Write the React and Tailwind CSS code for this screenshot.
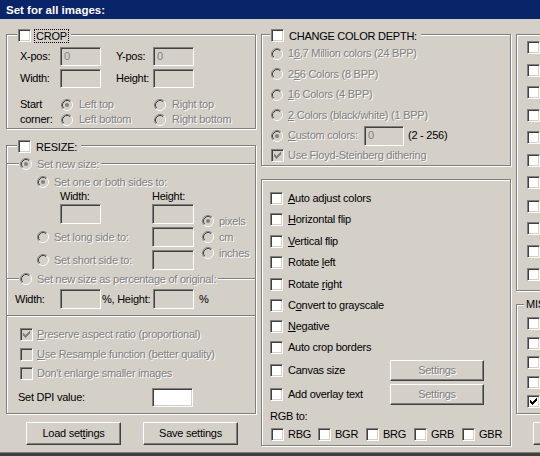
import React from 'react';

// Win2000 style dialog: batch "advanced options"
const DIS = 'text-[#808080] [text-shadow:1px_1px_0_#fff]';
const GROUP = 'relative border border-[#808080] shadow-[inset_1px_1px_0_#fff,1px_1px_0_#fff]';

function Check({ checked, disabled, className = '' }) {
  return (
    <span
      className={`relative inline-block w-[13px] h-[13px] shrink-0 border border-t-[#808080] border-l-[#808080] border-b-white border-r-white shadow-[inset_1px_1px_0_#404040,inset_-1px_-1px_0_#d4d0c8] ${
        disabled ? 'bg-[#d4d0c8]' : 'bg-white'
      } ${className}`}
    >
      {checked && (
        <svg width="7" height="7" viewBox="0 0 7 7" className="absolute left-[2px] top-[2px]">
          {[2, 3, 4, 3, 2, 1, 0].map((y, i) => (
            <rect key={i} x={i} y={y} width="1" height="3" fill={disabled ? '#808080' : '#000'} />
          ))}
        </svg>
      )}
    </span>
  );
}

function Radio({ checked, disabled = true, className = '' }) {
  return (
    <svg width="12" height="12" viewBox="0 0 12 12" className={`shrink-0 ${className}`}>
      <circle cx="6" cy="6" r="4" fill={disabled ? '#d4d0c8' : '#fff'} />
      <path d="M2.11 9.89A5.5 5.5 0 0 1 9.89 2.11" stroke="#808080" fill="none" />
      <path d="M9.89 2.11A5.5 5.5 0 0 1 2.11 9.89" stroke="#fff" fill="none" />
      <path d="M2.82 9.18A4.5 4.5 0 0 1 9.18 2.82" stroke="#404040" fill="none" />
      <path d="M9.18 2.82A4.5 4.5 0 0 1 2.82 9.18" stroke="#d4d0c8" fill="none" />
      {checked && <circle cx="6" cy="6" r="2" fill={disabled ? '#808080' : '#000'} />}
    </svg>
  );
}

function Field({ w, h = 'h-[19px]', value, white }) {
  return (
    <div
      className={`${w} ${h} shrink-0 border border-t-[#808080] border-l-[#808080] border-b-white border-r-white shadow-[inset_1px_1px_0_#404040,inset_-1px_-1px_0_#d4d0c8] ${
        white ? 'bg-white' : 'bg-[#d4d0c8]'
      } pl-[3px] pt-[1px] text-[#808080] leading-[15px]`}
    >
      {value}
    </div>
  );
}

function Btn({ children, w, h, disabled }) {
  return (
    <div
      className={`${w} ${h} shrink-0 flex items-center justify-center border border-t-white border-l-white border-b-[#404040] border-r-[#404040] shadow-[inset_-1px_-1px_0_#808080] ${
        disabled ? DIS : 'text-black'
      }`}
    >
      {children}
    </div>
  );
}

function Etch({ className = '' }) {
  return <div className={`h-[2px] border-t border-t-[#808080] border-b border-b-white ${className}`} />;
}

const effects = [
  { mt: 'mt-[8px]', label: <><u>A</u>uto adjust colors</> },
  { mt: 'mt-0', label: <><u>H</u>orizontal flip</> },
  { mt: 'mt-[1px]', label: <><u>V</u>ertical flip</> },
  { mt: 'mt-0', label: <>Rotate <u>l</u>eft</> },
  { mt: 'mt-[1px]', label: <>Rotate <u>r</u>ight</> },
  { mt: 'mt-0', label: <>C<u>o</u>nvert to grayscale</> },
  { mt: 'mt-0', label: <><u>N</u>egative</> },
  { mt: 'mt-0', label: <>Auto crop borders</> },
  { mt: 'mt-[2px]', label: <>Canvas size</>, btn: true },
  { mt: 'mt-[3px]', label: <>Add overlay text</>, btn: true },
];

// right column: only the checkboxes show, their captions lie past the window edge
const rightOpts = ['mt-[6px]', 'mt-[10px]', 'mt-[9px]', 'mt-[10px]', 'mt-[9px]', 'mt-[10px]', 'mt-[9px]', 'mt-[11px]', 'mt-[9px]', 'mt-[10px]', 'mt-[10px]'];
const miscOpts = [
  { mt: 'mt-[12px]' },
  { mt: 'mt-[7px]' },
  { mt: 'mt-[6px]' },
  { mt: 'mt-[7px]' },
  { mt: 'mt-[6px]', checked: true },
];

const colorDepth = [
  { h: 'h-[21px]', label: <>1<u>6</u>,7 Million colors (24 BPP)</> },
  { h: 'h-[20px]', label: <>2<u>5</u>6 Colors (8 BPP)</> },
  { h: 'h-[21px]', label: <><u>1</u>6 Colors (4 BPP)</> },
  { h: 'h-[20px]', label: <><u>2</u> Colors (black/white) (1 BPP)</> },
];

export default function App() {
  return (
    <div className="w-[540px] h-[456px] overflow-hidden bg-[#d4d0c8] flex flex-col font-['Liberation_Sans',Arial,sans-serif] text-[11px] leading-[13px] tracking-[-0.25px] text-black select-none">
      {/* title strip */}
      <div className="h-[19px] shrink-0 bg-[#0a246a] pl-[6px] pt-[2px] text-white font-bold text-[11.5px] leading-[17px] tracking-normal">
        Set for all images:
      </div>

      <div className="flex-1 flex items-start pt-[1px]">
        {/* left column */}
        <div className="ml-[6px] w-[250px] shrink-0 flex flex-col">
          <div className={`${GROUP} mt-[14px] h-[95px]`}>
            <div className="absolute -top-[6px] left-[10px] pl-[1px] pr-[2px] h-[13px] flex items-center bg-[#d4d0c8]">
              <Check />
              <span className="ml-[3px] px-[1px] border border-dotted border-black leading-[12px]">CROP</span>
            </div>
            <div className="pl-[13px] pt-[12px]">
              <div className="flex items-center h-[19px]">
                <span className="w-[40px]">X-pos:</span>
                <Field w="w-[41px]" value="0" />
                <span className="w-[52px] pl-[15px]">Y-pos:</span>
                <Field w="w-[41px]" value="0" />
              </div>
              <div className="flex items-center h-[19px] mt-[3px]">
                <span className="w-[40px]">Width:</span>
                <Field w="w-[41px]" />
                <span className="w-[52px] pl-[15px]">Height:</span>
                <Field w="w-[41px]" />
              </div>
              <div className="flex mt-[9px]">
                <div className="w-[41px] flex flex-col">
                  <span className="h-[15px] leading-[15px]">Start</span>
                  <span className="h-[15px] leading-[15px]">corner:</span>
                </div>
                <div className="grid grid-cols-[93px_auto]">
                  <div className="h-[15px] flex items-center"><Radio checked /><span className={`ml-[6px] ${DIS}`}>Left top</span></div>
                  <div className="h-[15px] flex items-center"><Radio /><span className={`ml-[6px] ${DIS}`}>Right top</span></div>
                  <div className="h-[15px] flex items-center"><Radio /><span className={`ml-[6px] ${DIS}`}>Left bottom</span></div>
                  <div className="h-[15px] flex items-center"><Radio /><span className={`ml-[6px] ${DIS}`}>Right bottom</span></div>
                </div>
              </div>
            </div>
          </div>

          <div className={`${GROUP} mt-[16px] h-[269px]`}>
            <div className="absolute -top-[6px] left-[10px] pl-[1px] pr-[2px] h-[13px] flex items-center bg-[#d4d0c8]">
              <Check />
              <span className="ml-[3px] px-[1px] border border-transparent leading-[12px]">RESIZE:</span>
            </div>

            <div className="mt-[12px] h-[12px] flex items-center">
              <Etch className="w-[12px]" />
              <Radio checked className="ml-[1px]" />
              <span className={`ml-[5px] ${DIS}`}>Set new size:</span>
              <Etch className="flex-1 ml-[2px]" />
            </div>
            <div className="mt-[6px] h-[12px] flex items-center pl-[30px]">
              <Radio checked />
              <span className={`ml-[5px] ${DIS}`}>Set one or both sides to:</span>
            </div>
            <div className="mt-[2px] h-[13px] flex pl-[53px]">
              <span className="w-[92px]">Width:</span>
              <span>Height:</span>
            </div>
            <div className="mt-[1px] flex">
              <div className="flex flex-col gap-[3px]">
                <div className="h-[20px] flex items-center pl-[53px]">
                  <Field w="w-[41px]" h="h-[20px]" />
                  <div className="ml-[51px]"><Field w="w-[42px]" h="h-[20px]" /></div>
                </div>
                <div className="h-[20px] flex items-center pl-[30px]">
                  <Radio />
                  <span className={`ml-[5px] w-[98px] ${DIS}`}>Set long side to:</span>
                  <Field w="w-[42px]" h="h-[20px]" />
                </div>
                <div className="h-[20px] flex items-center pl-[30px]">
                  <Radio />
                  <span className={`ml-[5px] w-[98px] ${DIS}`}>Set short side to:</span>
                  <Field w="w-[42px]" h="h-[20px]" />
                </div>
              </div>
              <div className="ml-[8px] pt-[11px] flex flex-col gap-[4px]">
                <div className="h-[12px] flex items-center"><Radio checked /><span className={`ml-[5px] ${DIS}`}>pixels</span></div>
                <div className="h-[12px] flex items-center"><Radio /><span className={`ml-[5px] ${DIS}`}>cm</span></div>
                <div className="h-[12px] flex items-center"><Radio /><span className={`ml-[5px] ${DIS}`}>inches</span></div>
              </div>
            </div>
            <div className="mt-[3px] h-[12px] flex items-center">
              <Etch className="w-[12px]" />
              <Radio className="ml-[1px]" />
              <span className={`ml-[5px] ${DIS}`}>Set new size as percentage of original:</span>
              <Etch className="flex-1 ml-[2px]" />
            </div>
            <div className="mt-[4px] h-[20px] flex items-center pl-[8px]">
              <span className="w-[45px]">Width:</span>
              <Field w="w-[41px]" h="h-[20px]" />
              <span className="w-[52px] pl-[1px]">%, Height:</span>
              <Field w="w-[41px]" h="h-[20px]" />
              <span className="ml-[5px]">%</span>
            </div>
            <Etch className="mt-[6px]" />
            <div className="mt-[11px] h-[13px] flex items-center pl-[13px]">
              <Check checked disabled />
              <span className={`ml-[4px] ${DIS}`}><u>P</u>reserve aspect ratio (proportional)</span>
            </div>
            <div className="mt-[7px] h-[13px] flex items-center pl-[13px]">
              <Check disabled />
              <span className={`ml-[4px] ${DIS}`}><u>U</u>se Resample function (better quality)</span>
            </div>
            <div className="mt-[6px] h-[13px] flex items-center pl-[13px]">
              <Check disabled />
              <span className={`ml-[4px] ${DIS}`}>Don't enlarge smaller images</span>
            </div>
            <div className="mt-[8px] h-[19px] flex items-center pl-[11px]">
              <span className="w-[134px]">Set DPI value:</span>
              <Field w="w-[41px]" white />
            </div>
          </div>

          <div className="mt-[8px] flex pl-[20px] gap-[22px]">
            <Btn w="w-[95px]" h="h-[23px]">Load set<u>t</u>ings</Btn>
            <Btn w="w-[95px]" h="h-[23px]">Save settings</Btn>
          </div>
        </div>

        {/* middle column */}
        <div className="ml-[5px] w-[250px] shrink-0 flex flex-col">
          <div className={`${GROUP} mt-[14px] h-[132px]`}>
            <div className="absolute -top-[6px] left-[8px] pl-[1px] pr-[2px] h-[13px] flex items-center bg-[#d4d0c8]">
              <Check />
              <span className="ml-[3px] px-[1px] border border-transparent leading-[12px]">CHANGE COLOR DEPTH:</span>
            </div>
            <div className="pt-[8px] pl-[9px]">
              {colorDepth.map((c, i) => (
                <div key={i} className={`${c.h} flex items-center`}>
                  <Radio />
                  <span className={`ml-[5px] ${DIS}`}>{c.label}</span>
                </div>
              ))}
              <div className="h-[21px] flex items-center">
                <Radio checked />
                <span className={`ml-[5px] w-[76px] ${DIS}`}><u>C</u>ustom colors:</span>
                <Field w="w-[40px]" h="h-[20px]" value="0" />
                <span className="ml-[4px]">(2 - 256)</span>
              </div>
              <div className="h-[19px] flex items-center">
                <Check checked disabled />
                <span className={`ml-[4px] ${DIS}`}>Use Floyd-Steinberg dithering</span>
              </div>
            </div>
          </div>

          <div className={`${GROUP} mt-[13px] h-[267px] pl-[8px]`}>
            {effects.map((e, i) => (
              <div key={i} className={`${e.mt} h-[21px] flex items-center`}>
                <Check />
                <span className={`ml-[5px] ${e.btn ? 'w-[102px]' : ''}`}>{e.label}</span>
                {e.btn && <Btn w="w-[94px]" h="h-[21px]" disabled>Settings</Btn>}
              </div>
            ))}
            <div className="mt-[5px] h-[13px]">RGB to:</div>
            <div className="mt-[5px] h-[13px] flex items-center pl-[1px]">
              {['RBG', 'BGR', 'BRG', 'GRB', 'GBR'].map((c, i) => (
                <div key={c} className={`flex items-center ${i === 0 ? 'w-[47px]' : i < 4 ? 'w-[48px]' : ''}`}>
                  <Check />
                  <span className="ml-[4px]">{c}</span>
                </div>
              ))}
            </div>
          </div>
        </div>

        {/* right column, cut off by the window edge */}
        <div className="ml-[5px] w-[250px] shrink-0 flex flex-col">
          <div className={`${GROUP} mt-[14px] h-[257px] pl-[10px]`}>
            {rightOpts.map((mt, i) => (
              <div key={i} className={`${mt} h-[13px] flex items-center`}>
                <Check />
              </div>
            ))}
          </div>
          <div className={`${GROUP} mt-[13px] h-[110px] pl-[10px]`}>
            <span className="absolute -top-[7px] left-[7px] px-[2px] bg-[#d4d0c8]">MISC.:</span>
            {miscOpts.map((o, i) => (
              <div key={i} className={`${o.mt} h-[13px] flex items-center`}>
                <Check checked={o.checked} />
              </div>
            ))}
          </div>
          <div className="mt-[8px] ml-[17px]">
            <Btn w="w-[95px]" h="h-[23px]" />
          </div>
        </div>
      </div>

      <div className="h-[4px] shrink-0 border-t border-t-[#808080] bg-[#404040]" />
    </div>
  );
}
